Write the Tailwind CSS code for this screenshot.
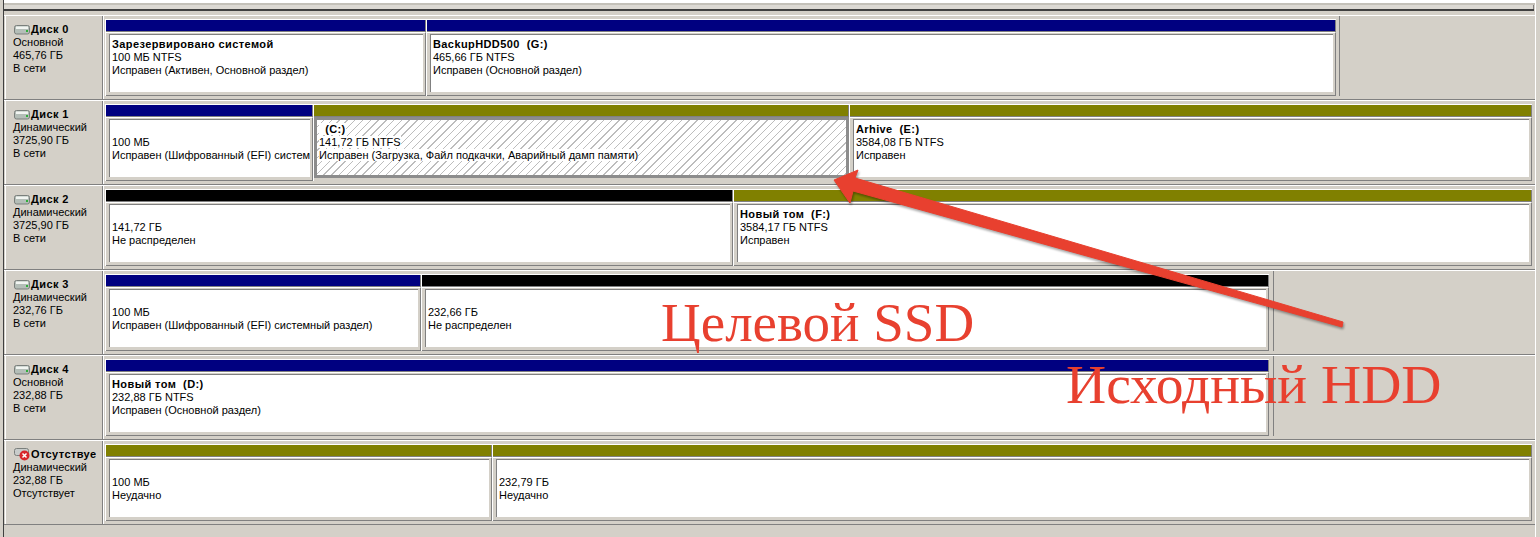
<!DOCTYPE html>
<html lang="ru">
  <head>
    <meta charset="UTF-8" />
    <title>Управление дисками</title>
    <script src="https://cdn.jsdelivr.net/npm/@tailwindcss/browser@4"></script>
  </head>
  <body class="bg-[#d4d0c8]">
    <div class="relative w-[1540px] h-[537px] overflow-hidden bg-[#d4d0c8] font-['Liberation_Sans',sans-serif] text-[11px] leading-[13px] text-black">
      <!-- Panel frame -->
      <div class="ml-[3px] w-[1533px] h-[537px] border-l border-l-[#404040] border-r border-r-white">
        <!-- Top strip -->
        <div class="h-[3px] bg-white"></div>
        <div class="h-[2px] bg-[#c4c1b9]"></div>
        <div class="h-[4px] w-[1530px] bg-[#dcd9d3] border-r border-r-[#808080]"></div>
        <div class="h-[2px] w-[1530px] bg-[#404040]"></div>
        <div class="h-[4px]"></div>

        <!-- Disk 0 -->
        <div class="flex h-[85px] border-t border-t-white border-b border-b-[#808080]">
          <div class="ml-px pl-[7px] pt-[7px] w-[98px] border-l border-l-white border-r border-r-[#808080] overflow-hidden">
            <div class="flex items-center h-[13px] font-bold tracking-[0.4px] whitespace-nowrap">
              <svg class="ml-[1px] mr-[1px] shrink-0" width="16" height="11" viewBox="0 0 16 11"><rect x="0.5" y="1.5" width="15" height="8.5" rx="2" fill="#b4beb8" stroke="#7a7f7c" /><rect x="2" y="2.5" width="12" height="2.5" fill="#f2f5f2" /><rect x="12" y="6" width="2" height="2" fill="#2fae3a" /></svg>
              <span>Диск 0</span>
            </div>
            <div>Основной</div>
            <div>465,76 ГБ</div>
            <div>В сети</div>
          </div>
          <div class="w-px bg-white"></div>
          <div class="flex h-[80px] pt-[3px] pl-px w-[1236px] border-r border-r-[#808080]">
            <div class="flex flex-col w-[321px] border-l border-t border-white border-r-0">
              <div class="h-[12px] bg-[#000080] border-b border-b-[#808080] border-r border-r-[#808080]"></div>
              <div class="flex-1 flex flex-col pl-[3px] pr-[2px] pt-[1px] pb-[3px] border-r border-r-[#808080] border-b border-b-[#808080] border-t border-t-white">
                <div class="flex-1 bg-white border-t border-l border-[#808080] pl-[2px] pt-[3px] whitespace-nowrap overflow-hidden">
                  <div class="font-bold tracking-[0.4px]">Зарезервировано системой</div>
                  <div>100 МБ NTFS</div>
                  <div>Исправен (Активен, Основной раздел)</div>
                </div>
              </div>
            </div>
            <div class="flex flex-col w-[910px] border-l border-t border-white">
              <div class="h-[12px] bg-[#000080] border-b border-b-[#808080] border-r border-r-[#808080]"></div>
              <div class="flex-1 flex flex-col pl-[3px] pr-[2px] pt-[1px] pb-[3px] border-r border-r-[#808080] border-b border-b-[#808080] border-t border-t-white">
                <div class="flex-1 bg-white border-t border-l border-[#808080] pl-[2px] pt-[3px] whitespace-nowrap overflow-hidden">
                  <div class="font-bold tracking-[0.4px]">BackupHDD500&nbsp; (G:)</div>
                  <div>465,66 ГБ NTFS</div>
                  <div>Исправен (Основной раздел)</div>
                </div>
              </div>
            </div>
          </div>
        </div>

        <!-- Disk 1 -->
        <div class="flex h-[85px] border-t border-t-white border-b border-b-[#808080]">
          <div class="ml-px pl-[7px] pt-[7px] w-[98px] border-l border-l-white border-r border-r-[#808080] overflow-hidden">
            <div class="flex items-center h-[13px] font-bold tracking-[0.4px] whitespace-nowrap">
              <svg class="ml-[1px] mr-[1px] shrink-0" width="16" height="11" viewBox="0 0 16 11"><rect x="0.5" y="1.5" width="15" height="8.5" rx="2" fill="#b4beb8" stroke="#7a7f7c" /><rect x="2" y="2.5" width="12" height="2.5" fill="#f2f5f2" /><rect x="12" y="6" width="2" height="2" fill="#2fae3a" /></svg>
              <span>Диск 1</span>
            </div>
            <div>Динамический</div>
            <div>3725,90 ГБ</div>
            <div>В сети</div>
          </div>
          <div class="w-px bg-white"></div>
          <div class="flex h-[80px] pt-[3px] pl-px">
            <div class="flex flex-col w-[208px] border-l border-t border-white">
              <div class="h-[12px] bg-[#000080] border-b border-b-[#808080] border-r border-r-[#808080]"></div>
              <div class="flex-1 flex flex-col pl-[3px] pr-[2px] pt-[1px] pb-[3px] border-r border-r-[#808080] border-b border-b-[#808080] border-t border-t-white">
                <div class="flex-1 bg-white border-t border-l border-[#808080] pl-[2px] pt-[3px] whitespace-nowrap overflow-hidden">
                  <div>&nbsp;</div>
                  <div>100 МБ</div>
                  <div>Исправен (Шифрованный (EFI) систем</div>
                </div>
              </div>
            </div>
            <div class="flex flex-col w-[536px] border-l border-t border-white">
              <div class="h-[12px] bg-[#808000] border-b border-b-[#808080] border-r border-r-[#808080]"></div>
              <div class="flex-1 flex flex-col border-[3px] border-[#8c8c8c] mb-[3px]">
                <div class="flex-1 bg-[repeating-linear-gradient(135deg,#ffffff_0,#ffffff_4.5px,#bdbdbd_4.5px,#bdbdbd_5.5px)] pl-[2px] pt-[3px] whitespace-nowrap overflow-hidden">
                  <div><span class="bg-white">&nbsp;&nbsp;<b class="tracking-[0.4px]">(C:)</b></span></div>
                  <div><span class="bg-white">141,72 ГБ NTFS</span></div>
                  <div><span class="bg-white">Исправен (Загрузка, Файл подкачки, Аварийный дамп памяти)</span></div>
                </div>
              </div>
            </div>
            <div class="flex flex-col w-[683px] border-l border-t border-white">
              <div class="h-[12px] bg-[#808000] border-b border-b-[#808080] border-r border-r-[#808080]"></div>
              <div class="flex-1 flex flex-col pl-[3px] pr-[2px] pt-[1px] pb-[3px] border-r border-r-[#808080] border-b border-b-[#808080] border-t border-t-white">
                <div class="flex-1 bg-white border-t border-l border-[#808080] pl-[2px] pt-[3px] whitespace-nowrap overflow-hidden">
                  <div class="font-bold tracking-[0.4px]">Arhive&nbsp; (E:)</div>
                  <div>3584,08 ГБ NTFS</div>
                  <div>Исправен</div>
                </div>
              </div>
            </div>
          </div>
        </div>

        <!-- Disk 2 -->
        <div class="flex h-[85px] border-t border-t-white border-b border-b-[#808080]">
          <div class="ml-px pl-[7px] pt-[7px] w-[98px] border-l border-l-white border-r border-r-[#808080] overflow-hidden">
            <div class="flex items-center h-[13px] font-bold tracking-[0.4px] whitespace-nowrap">
              <svg class="ml-[1px] mr-[1px] shrink-0" width="16" height="11" viewBox="0 0 16 11"><rect x="0.5" y="1.5" width="15" height="8.5" rx="2" fill="#b4beb8" stroke="#7a7f7c" /><rect x="2" y="2.5" width="12" height="2.5" fill="#f2f5f2" /><rect x="12" y="6" width="2" height="2" fill="#2fae3a" /></svg>
              <span>Диск 2</span>
            </div>
            <div>Динамический</div>
            <div>3725,90 ГБ</div>
            <div>В сети</div>
          </div>
          <div class="w-px bg-white"></div>
          <div class="flex h-[80px] pt-[3px] pl-px">
            <div class="flex flex-col w-[628px] border-l border-t border-white">
              <div class="h-[12px] bg-black border-b border-b-[#808080] border-r border-r-[#808080]"></div>
              <div class="flex-1 flex flex-col pl-[3px] pr-[2px] pt-[1px] pb-[3px] border-r border-r-[#808080] border-b border-b-[#808080] border-t border-t-white">
                <div class="flex-1 bg-white border-t border-l border-[#808080] pl-[2px] pt-[3px] whitespace-nowrap overflow-hidden">
                  <div>&nbsp;</div>
                  <div>141,72 ГБ</div>
                  <div>Не распределен</div>
                </div>
              </div>
            </div>
            <div class="flex flex-col w-[799px] border-l border-t border-white">
              <div class="h-[12px] bg-[#808000] border-b border-b-[#808080] border-r border-r-[#808080]"></div>
              <div class="flex-1 flex flex-col pl-[3px] pr-[2px] pt-[1px] pb-[3px] border-r border-r-[#808080] border-b border-b-[#808080] border-t border-t-white">
                <div class="flex-1 bg-white border-t border-l border-[#808080] pl-[2px] pt-[3px] whitespace-nowrap overflow-hidden">
                  <div class="font-bold tracking-[0.4px]">Новый том&nbsp; (F:)</div>
                  <div>3584,17 ГБ NTFS</div>
                  <div>Исправен</div>
                </div>
              </div>
            </div>
          </div>
        </div>

        <!-- Disk 3 -->
        <div class="flex h-[85px] border-t border-t-white border-b border-b-[#808080]">
          <div class="ml-px pl-[7px] pt-[7px] w-[98px] border-l border-l-white border-r border-r-[#808080] overflow-hidden">
            <div class="flex items-center h-[13px] font-bold tracking-[0.4px] whitespace-nowrap">
              <svg class="ml-[1px] mr-[1px] shrink-0" width="16" height="11" viewBox="0 0 16 11"><rect x="0.5" y="1.5" width="15" height="8.5" rx="2" fill="#b4beb8" stroke="#7a7f7c" /><rect x="2" y="2.5" width="12" height="2.5" fill="#f2f5f2" /><rect x="12" y="6" width="2" height="2" fill="#2fae3a" /></svg>
              <span>Диск 3</span>
            </div>
            <div>Динамический</div>
            <div>232,76 ГБ</div>
            <div>В сети</div>
          </div>
          <div class="w-px bg-white"></div>
          <div class="flex h-[80px] pt-[3px] pl-px w-[1170px] border-r border-r-[#808080]">
            <div class="flex flex-col w-[316px] border-l border-t border-white">
              <div class="h-[12px] bg-[#000080] border-b border-b-[#808080] border-r border-r-[#808080]"></div>
              <div class="flex-1 flex flex-col pl-[3px] pr-[2px] pt-[1px] pb-[3px] border-r border-r-[#808080] border-b border-b-[#808080] border-t border-t-white">
                <div class="flex-1 bg-white border-t border-l border-[#808080] pl-[2px] pt-[3px] whitespace-nowrap overflow-hidden">
                  <div>&nbsp;</div>
                  <div>100 МБ</div>
                  <div>Исправен (Шифрованный (EFI) системный раздел)</div>
                </div>
              </div>
            </div>
            <div class="flex flex-col w-[848px] border-l border-t border-white">
              <div class="h-[12px] bg-black border-b border-b-[#808080] border-r border-r-[#808080]"></div>
              <div class="flex-1 flex flex-col pl-[3px] pr-[2px] pt-[1px] pb-[3px] border-r border-r-[#808080] border-b border-b-[#808080] border-t border-t-white">
                <div class="flex-1 bg-white border-t border-l border-[#808080] pl-[2px] pt-[3px] whitespace-nowrap overflow-hidden">
                  <div>&nbsp;</div>
                  <div>232,66 ГБ</div>
                  <div>Не распределен</div>
                </div>
              </div>
            </div>
          </div>
        </div>

        <!-- Disk 4 -->
        <div class="flex h-[85px] border-t border-t-white border-b border-b-[#808080]">
          <div class="ml-px pl-[7px] pt-[7px] w-[98px] border-l border-l-white border-r border-r-[#808080] overflow-hidden">
            <div class="flex items-center h-[13px] font-bold tracking-[0.4px] whitespace-nowrap">
              <svg class="ml-[1px] mr-[1px] shrink-0" width="16" height="11" viewBox="0 0 16 11"><rect x="0.5" y="1.5" width="15" height="8.5" rx="2" fill="#b4beb8" stroke="#7a7f7c" /><rect x="2" y="2.5" width="12" height="2.5" fill="#f2f5f2" /><rect x="12" y="6" width="2" height="2" fill="#2fae3a" /></svg>
              <span>Диск 4</span>
            </div>
            <div>Основной</div>
            <div>232,88 ГБ</div>
            <div>В сети</div>
          </div>
          <div class="w-px bg-white"></div>
          <div class="flex h-[80px] pt-[3px] pl-px w-[1170px] border-r border-r-[#808080]">
            <div class="flex flex-col w-[1164px] border-l border-t border-white">
              <div class="h-[12px] bg-[#000080] border-b border-b-[#808080] border-r border-r-[#808080]"></div>
              <div class="flex-1 flex flex-col pl-[3px] pr-[2px] pt-[1px] pb-[3px] border-r border-r-[#808080] border-b border-b-[#808080] border-t border-t-white">
                <div class="flex-1 bg-white border-t border-l border-[#808080] pl-[2px] pt-[3px] whitespace-nowrap overflow-hidden">
                  <div class="font-bold tracking-[0.4px]">Новый том&nbsp; (D:)</div>
                  <div>232,88 ГБ NTFS</div>
                  <div>Исправен (Основной раздел)</div>
                </div>
              </div>
            </div>
          </div>
        </div>

        <!-- Missing disk -->
        <div class="flex h-[85px] border-t border-t-white border-b border-b-[#808080]">
          <div class="ml-px pl-[7px] pt-[7px] w-[98px] border-l border-l-white border-r border-r-[#808080] overflow-hidden">
            <div class="flex items-center h-[13px] font-bold tracking-[0.4px] whitespace-nowrap w-[83px] overflow-hidden">
              <svg class="ml-[1px] mr-[1px] shrink-0" width="16" height="13" viewBox="0 0 16 13"><rect x="0.5" y="0.5" width="14" height="7" rx="2" fill="#c8cccb" stroke="#7a7f7c" /><circle cx="10.5" cy="7.5" r="5" fill="#d8252c" /><path d="M8.5 5.5l4 4M12.5 5.5l-4 4" stroke="#fff" stroke-width="1.5" /></svg>
              <span class="shrink-0">Отсутствует</span>
            </div>
            <div>Динамический</div>
            <div>232,88 ГБ</div>
            <div>Отсутствует</div>
          </div>
          <div class="w-px bg-white"></div>
          <div class="flex h-[80px] pt-[3px] pl-px">
            <div class="flex flex-col w-[387px] border-l border-t border-white">
              <div class="h-[12px] bg-[#808000] border-b border-b-[#808080] border-r border-r-[#808080]"></div>
              <div class="flex-1 flex flex-col pl-[3px] pr-[2px] pt-[1px] pb-[3px] border-r border-r-[#808080] border-b border-b-[#808080] border-t border-t-white">
                <div class="flex-1 bg-white border-t border-l border-[#808080] pl-[2px] pt-[3px] whitespace-nowrap overflow-hidden">
                  <div>&nbsp;</div>
                  <div>100 МБ</div>
                  <div>Неудачно</div>
                </div>
              </div>
            </div>
            <div class="flex flex-col w-[1040px] border-l border-t border-white">
              <div class="h-[12px] bg-[#808000] border-b border-b-[#808080] border-r border-r-[#808080]"></div>
              <div class="flex-1 flex flex-col pl-[3px] pr-[2px] pt-[1px] pb-[3px] border-r border-r-[#808080] border-b border-b-[#808080] border-t border-t-white">
                <div class="flex-1 bg-white border-t border-l border-[#808080] pl-[2px] pt-[3px] whitespace-nowrap overflow-hidden">
                  <div>&nbsp;</div>
                  <div>232,79 ГБ</div>
                  <div>Неудачно</div>
                </div>
              </div>
            </div>
          </div>
        </div>
      </div>

      <!-- Annotations drawn over the screenshot -->
      <svg class="absolute left-0 top-0 drop-shadow-[1px_2px_1px_rgba(0,0,0,0.35)]" width="1540" height="537" viewBox="0 0 1540 537">
        <polygon points="834,180 858,170 855,178 1343,322 1342,327 853,191 850,203" fill="#e8402f" stroke="#e8402f" stroke-width="1" stroke-linejoin="round" />
      </svg>
      <div class="absolute left-[661px] top-[293px] font-['Liberation_Serif',serif] text-[55px] leading-[60px] text-[#e8402f] whitespace-nowrap">Целевой SSD</div>
      <div class="absolute left-[1066px] top-[354px] font-['Liberation_Serif',serif] text-[55.6px] leading-[60px] text-[#e8402f] whitespace-nowrap">Исходный HDD</div>
    </div>
  </body>
</html>
